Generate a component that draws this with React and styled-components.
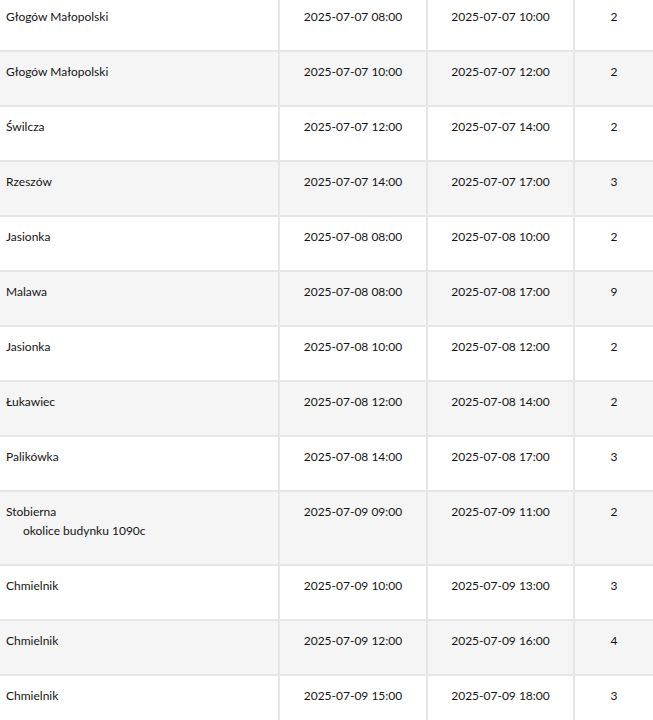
import React from "react";
import styled, { createGlobalStyle } from "styled-components";

const Global = createGlobalStyle`
  html, body { margin: 0; padding: 0; background: #fff; }
  body { font-family: Lato, "Liberation Sans", sans-serif; color: #141414; }
  * { box-sizing: border-box; }
`;

const Table = styled.table`
  width: 653px;
  margin-top: -5px;
  border-collapse: collapse;
  table-layout: fixed;
  font-size: 12px;
  line-height: 19px;
`;

const Row = styled.tr`
  background: ${(p) => (p.$striped ? "#f5f5f5" : "#ffffff")};
`;

const Cell = styled.td`
  vertical-align: top;
  padding: 10px 6px 24px;
  border-top: 2px solid #e6e6e6;
  border-left: 2px solid #e6e6e6;
  text-align: center;
`;

const PlaceCell = styled(Cell)`
  width: 279px;
  text-align: left;
  border-left: none;
`;

const FromCell = styled(Cell)`
  width: 148px;
`;

const ToCell = styled(Cell)`
  width: 147px;
`;

const CountCell = styled(Cell)`
  width: 79px;
`;

const Sub = styled.div`
  padding-left: 17px;
`;

const rows = [
  ["Głogów Małopolski", null, "2025-07-07 08:00", "2025-07-07 10:00", "2"],
  ["Głogów Małopolski", null, "2025-07-07 10:00", "2025-07-07 12:00", "2"],
  ["Świlcza", null, "2025-07-07 12:00", "2025-07-07 14:00", "2"],
  ["Rzeszów", null, "2025-07-07 14:00", "2025-07-07 17:00", "3"],
  ["Jasionka", null, "2025-07-08 08:00", "2025-07-08 10:00", "2"],
  ["Malawa", null, "2025-07-08 08:00", "2025-07-08 17:00", "9"],
  ["Jasionka", null, "2025-07-08 10:00", "2025-07-08 12:00", "2"],
  ["Łukawiec", null, "2025-07-08 12:00", "2025-07-08 14:00", "2"],
  ["Palikówka", null, "2025-07-08 14:00", "2025-07-08 17:00", "3"],
  ["Stobierna", "okolice budynku 1090c", "2025-07-09 09:00", "2025-07-09 11:00", "2"],
  ["Chmielnik", null, "2025-07-09 10:00", "2025-07-09 13:00", "3"],
  ["Chmielnik", null, "2025-07-09 12:00", "2025-07-09 16:00", "4"],
  ["Chmielnik", null, "2025-07-09 15:00", "2025-07-09 18:00", "3"],
];

export default function App() {
  return (
    <>
      <Global />
      <Table>
        <tbody>
          {rows.map(([place, sub, from, to, n], i) => (
            <Row key={i} $striped={i % 2 === 1}>
              <PlaceCell>
                {place}
                {sub && <Sub>{sub}</Sub>}
              </PlaceCell>
              <FromCell>{from}</FromCell>
              <ToCell>{to}</ToCell>
              <CountCell>{n}</CountCell>
            </Row>
          ))}
        </tbody>
      </Table>
    </>
  );
}
